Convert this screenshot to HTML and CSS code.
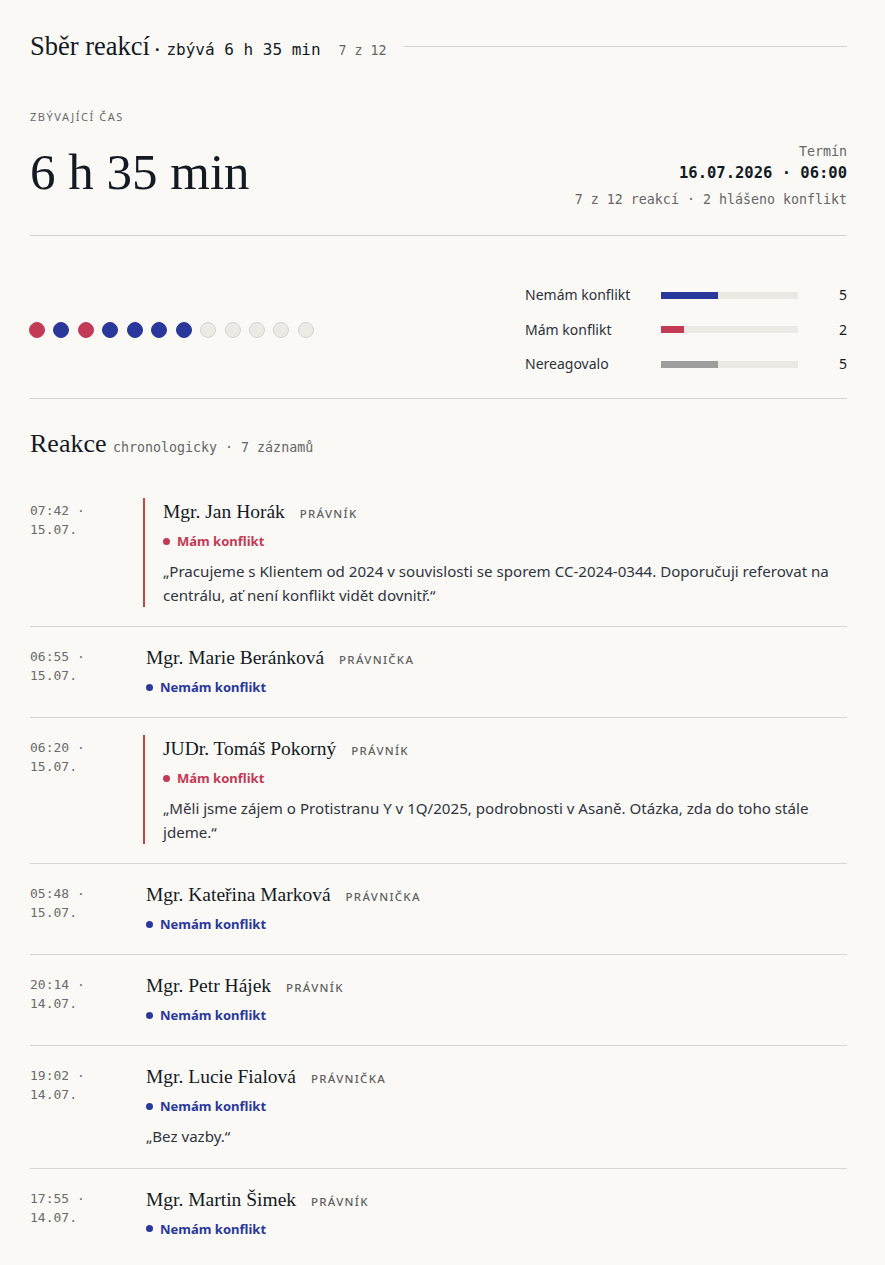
FILE: index.html
```html
<!DOCTYPE html>
<html lang="cs">
  <head>
    <meta charset="UTF-8" />
    <title>Sběr reakcí</title>
    <link rel="stylesheet" href="styles.css">
  </head>
  <body>
    <div class="page">
      <header class="top">
        <h1>Sběr reakcí</h1>
        <span class="sep">·</span>
        <span class="left-mono">zbývá 6 h 35 min</span>
        <span class="count-mono">7 z 12</span>
        <span class="rule"></span>
      </header>

      <section class="overview">
        <div>
          <div class="eyebrow">Zbývající čas</div>
          <div class="big">6 h 35 min</div>
        </div>
        <div class="deadline">
          <div class="deadline-label">Termín</div>
          <div class="deadline-date">16.07.2026 · 06:00</div>
          <div class="deadline-sum">7 z 12 reakcí · 2 hlášeno konflikt</div>
        </div>
      </section>

      <section class="tally">
        <div class="dots">
          <span class="dot red"></span>
          <span class="dot blue"></span>
          <span class="dot red"></span>
          <span class="dot blue"></span>
          <span class="dot blue"></span>
          <span class="dot blue"></span>
          <span class="dot blue"></span>
          <span class="dot"></span>
          <span class="dot"></span>
          <span class="dot"></span>
          <span class="dot"></span>
          <span class="dot"></span>
        </div>
        <div class="bars">
          <div class="bar-label">Nemám konflikt</div>
          <div class="track"><div class="fill blue" style="width: 41.67%"></div></div>
          <div class="bar-value">5</div>

          <div class="bar-label">Mám konflikt</div>
          <div class="track"><div class="fill red" style="width: 16.67%"></div></div>
          <div class="bar-value">2</div>

          <div class="bar-label">Nereagovalo</div>
          <div class="track"><div class="fill gray" style="width: 41.67%"></div></div>
          <div class="bar-value">5</div>
        </div>
      </section>

      <h2 class="list-title">Reakce <span>chronologicky · 7 záznamů</span></h2>

      <div class="entries">
        <div class="entry">
          <div class="when">07:42 · 15.07.</div>
          <div class="body conflict">
            <div class="who">Mgr. Jan Horák <span class="role">Právník</span></div>
            <div class="status red">Mám konflikt</div>
            <p class="quote">„Pracujeme s Klientem od 2024 v souvislosti se sporem CC-2024-0344. Doporučuji referovat na centrálu, ať není konflikt vidět dovnitř.“</p>
          </div>
        </div>

        <div class="entry">
          <div class="when">06:55 · 15.07.</div>
          <div class="body">
            <div class="who">Mgr. Marie Beránková <span class="role">Právnička</span></div>
            <div class="status blue">Nemám konflikt</div>
          </div>
        </div>

        <div class="entry">
          <div class="when">06:20 · 15.07.</div>
          <div class="body conflict">
            <div class="who">JUDr. Tomáš Pokorný <span class="role">Právník</span></div>
            <div class="status red">Mám konflikt</div>
            <p class="quote">„Měli jsme zájem o Protistranu Y v 1Q/2025, podrobnosti v Asaně. Otázka, zda do toho stále jdeme.“</p>
          </div>
        </div>

        <div class="entry">
          <div class="when">05:48 · 15.07.</div>
          <div class="body">
            <div class="who">Mgr. Kateřina Marková <span class="role">Právnička</span></div>
            <div class="status blue">Nemám konflikt</div>
          </div>
        </div>

        <div class="entry">
          <div class="when">20:14 · 14.07.</div>
          <div class="body">
            <div class="who">Mgr. Petr Hájek <span class="role">Právník</span></div>
            <div class="status blue">Nemám konflikt</div>
          </div>
        </div>

        <div class="entry">
          <div class="when">19:02 · 14.07.</div>
          <div class="body">
            <div class="who">Mgr. Lucie Fialová <span class="role">Právnička</span></div>
            <div class="status blue">Nemám konflikt</div>
            <p class="quote">„Bez vazby.“</p>
          </div>
        </div>

        <div class="entry">
          <div class="when">17:55 · 14.07.</div>
          <div class="body">
            <div class="who">Mgr. Martin Šimek <span class="role">Právník</span></div>
            <div class="status blue">Nemám konflikt</div>
          </div>
        </div>
      </div>
    </div>
  </body>
</html>
```

FILE: styles.css
```css
body {
  margin: 0;
  background: #faf9f6;
  color: #141a24;
  font-family: "Noto Sans", sans-serif;
}

.page {
  width: 817px;
  margin-left: 30px;
  padding-top: 32px;
}

/* header */

.top {
  display: flex;
  align-items: baseline;
  height: 28px;
}

.top h1 {
  margin: 0;
  font-family: "Liberation Serif", serif;
  font-weight: 400;
  font-size: 26.5px;
  line-height: 28px;
}

.sep {
  margin: 0 7px 0 5px;
  font-size: 16px;
  font-weight: 700;
  line-height: 1;
}

.left-mono {
  font-family: "DejaVu Sans Mono", monospace;
  font-size: 16px;
  line-height: 1;
}

.count-mono {
  margin-left: 18px;
  font-family: "DejaVu Sans Mono", monospace;
  font-size: 13.3px;
  line-height: 1;
  color: #666;
}

.rule {
  flex: 1;
  margin-left: 17px;
  border-top: 1px solid #d6d4ce;
  align-self: center;
}

/* remaining time */

.overview {
  display: flex;
  justify-content: space-between;
  align-items: flex-end;
  margin-top: 49px;
  padding-bottom: 25px;
  border-bottom: 1px solid #d6d4ce;
}

.eyebrow {
  font-size: 11px;
  line-height: 16px;
  letter-spacing: 1.55px;
  text-transform: uppercase;
  color: #6b6b6b;
  margin-bottom: 14px;
}

.big {
  font-family: "Liberation Serif", serif;
  font-size: 51px;
  line-height: 66px;
  padding-bottom: 5px;
}

.deadline {
  text-align: right;
  font-family: "DejaVu Sans Mono", monospace;
}

.deadline-label {
  font-size: 13.3px;
  line-height: 20px;
  color: #666;
}

.deadline-date {
  font-size: 15.5px;
  font-weight: 700;
  line-height: 22px;
}

.deadline-sum {
  margin-top: 6px;
  font-size: 13.3px;
  line-height: 20px;
  color: #666;
}

/* tally */

.tally {
  display: flex;
  justify-content: space-between;
  align-items: center;
  padding: 49px 0 24px;
  border-bottom: 1px solid #d6d4ce;
}

.dots {
  display: flex;
  gap: 8.45px;
  margin-left: -1px;
}

.dot {
  width: 14px;
  height: 14px;
  border-radius: 50%;
  background: #ebeae5;
  border: 1px solid #d6d4cd;
}

.dot.red {
  background: #c23a55;
  border-color: #c23a55;
}

.dot.blue {
  background: #2a379b;
  border-color: #2a379b;
}

.bars {
  display: grid;
  grid-template-columns: 136px 137px 49px;
  row-gap: 14.5px;
  align-items: center;
}

.bar-label {
  font-size: 14px;
  line-height: 20px;
  color: #2c313a;
}

.bar-value {
  text-align: right;
  font-size: 14px;
  line-height: 20px;
}

.track {
  height: 7px;
  background: #ebe9e4;
}

.fill {
  height: 100%;
}

.fill.blue {
  background: #2a379b;
}

.fill.red {
  background: #c23a55;
}

.fill.gray {
  background: #9d9d9d;
}

/* list of reactions */

.list-title {
  margin: 30px 0 22px;
  font-family: "Liberation Serif", serif;
  font-weight: 400;
  font-size: 26px;
  line-height: 30px;
}

.list-title span {
  font-family: "DejaVu Sans Mono", monospace;
  font-size: 13.3px;
  line-height: 1;
  color: #666;
}

.entry {
  display: grid;
  grid-template-columns: 96px 1fr;
  column-gap: 20px;
  padding: 17px 0 19px;
}

.entry + .entry {
  border-top: 1px solid #d6d4ce;
}

.when {
  padding-top: 3px;
  font-family: "DejaVu Sans Mono", monospace;
  font-size: 13px;
  line-height: 19px;
  color: #6b6b6b;
}

.body.conflict {
  margin-left: -3px;
  padding-left: 18px;
  border-left: 2px solid #c4473e;
}

.who {
  font-family: "Liberation Serif", serif;
  font-size: 19.5px;
  line-height: 28px;
}

.role {
  margin-left: 10px;
  font-family: "Noto Sans", sans-serif;
  font-size: 11.5px;
  font-weight: 500;
  line-height: 1;
  letter-spacing: 1.3px;
  text-transform: uppercase;
  color: #5f5f5f;
}

.status {
  display: flex;
  align-items: center;
  margin-top: 4px;
  font-size: 13px;
  font-weight: 700;
  line-height: 22px;
}

.status::before {
  content: "";
  width: 7px;
  height: 7px;
  margin-right: 7px;
  border-radius: 50%;
  background: currentColor;
}

.status.red {
  color: #c23a55;
}

.status.blue {
  color: #2a379b;
}

.quote {
  margin: 8px 0 0;
  font-size: 15.1px;
  line-height: 23.5px;
  color: #2f3440;
}
```
